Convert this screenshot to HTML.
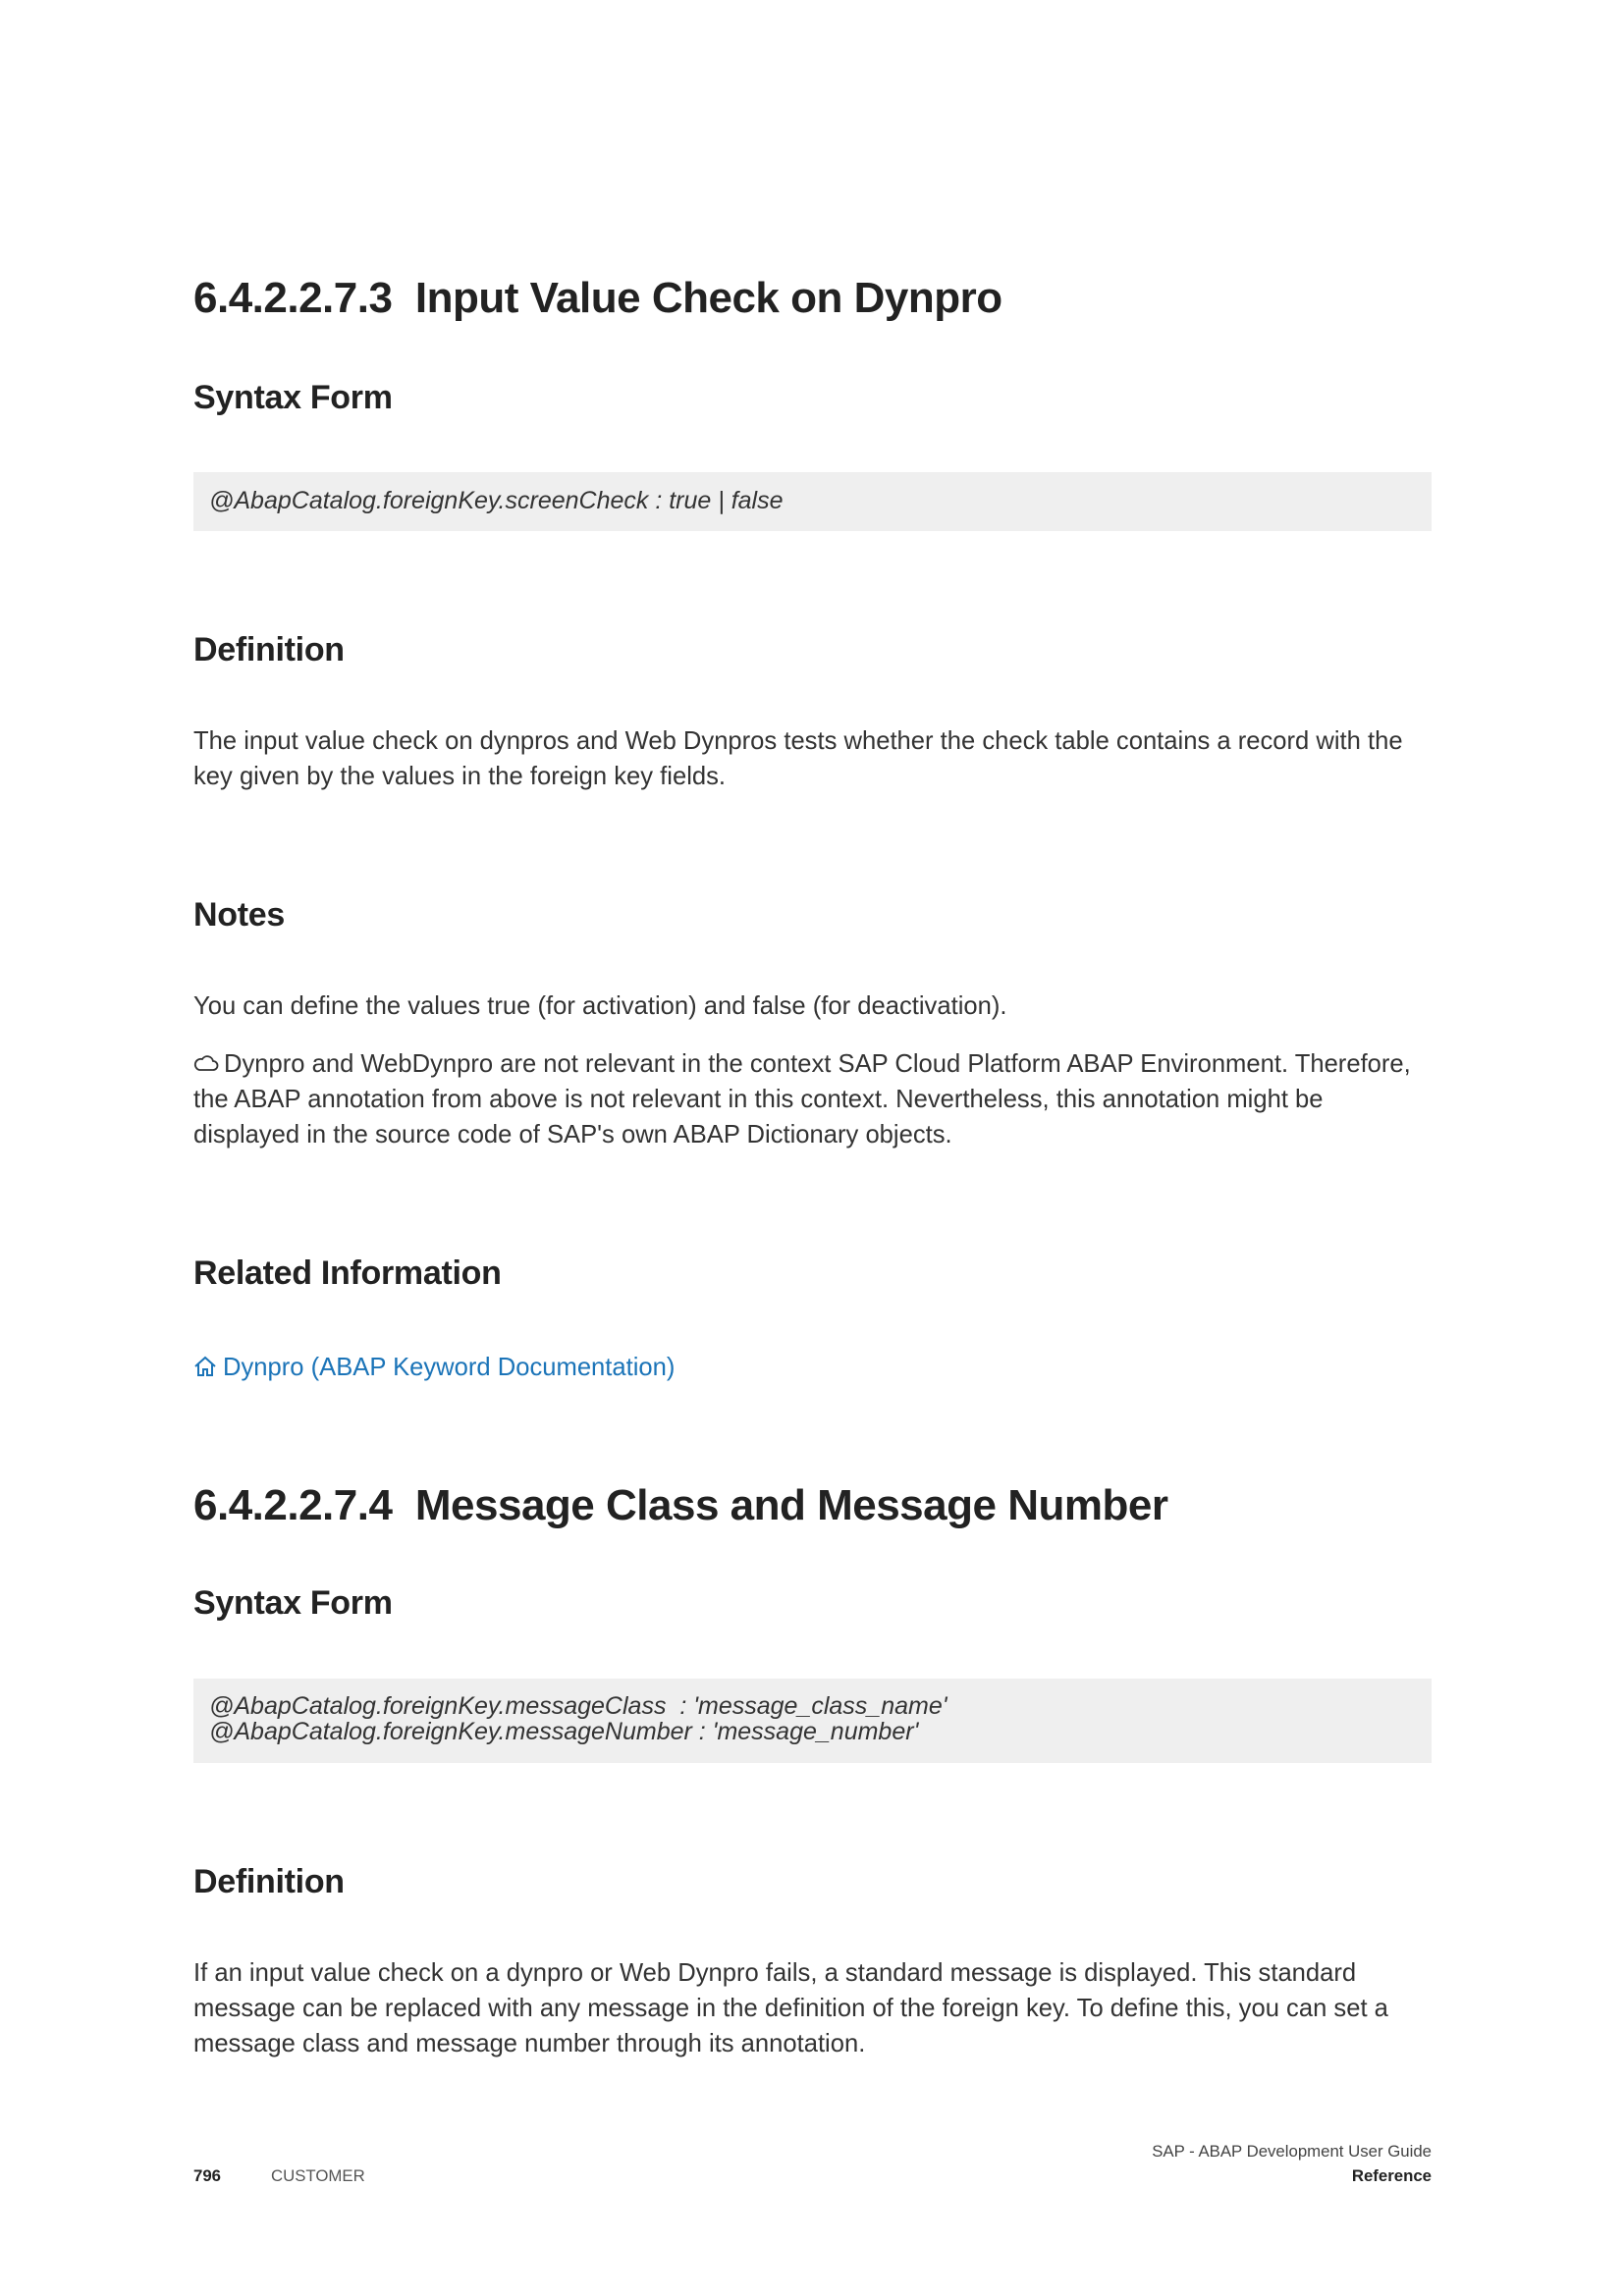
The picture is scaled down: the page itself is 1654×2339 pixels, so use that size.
<!DOCTYPE html>
<html><head><meta charset="utf-8"><style>
body{margin:0;background:#fff;}
.p{position:relative;width:1654px;height:2339px;font-family:"Liberation Sans",sans-serif;color:#333;}
.a{position:absolute;left:197px;white-space:nowrap;}
.h1{font-size:44px;font-weight:bold;color:#222;line-height:50px;letter-spacing:-0.5px;}
.h2{font-size:34px;font-weight:bold;color:#222;line-height:40px;letter-spacing:-0.3px;}
.t{font-size:25.6px;line-height:36px;color:#333;}
.code{position:absolute;left:197px;width:1261px;background:#efefef;}
.c{font-style:italic;font-size:25px;color:#333;position:absolute;left:16px;white-space:nowrap;line-height:26px;}
.f{font-size:16.8px;line-height:20px;}
</style></head><body><div class="p">
<div class="a h1" style="top:279px">6.4.2.2.7.3&nbsp; Input Value Check on Dynpro</div>
<div class="a h2" style="top:385px">Syntax Form</div>
<div class="code" style="top:481px;height:60px"><div class="c" style="top:16px">@AbapCatalog.foreignKey.screenCheck : true | false</div></div>
<div class="a h2" style="top:642px">Definition</div>
<div class="a t" style="top:737px">The input value check on dynpros and Web Dynpros tests whether the check table contains a record with the<br>key given by the values in the foreign key fields.</div>
<div class="a h2" style="top:912px">Notes</div>
<div class="a t" style="top:1007px">You can define the values true (for activation) and false (for deactivation).</div>
<div class="a t" style="top:1066px"><svg width="26" height="20" viewBox="0 0 26 20" style="vertical-align:-1px;margin-right:5px"><path d="M6 17 H20 A4.5 4.5 0 0 0 20 8 A6 6 0 0 0 9 6 A5 5 0 0 0 6 17 Z" fill="none" stroke="#333" stroke-width="1.8"/></svg>Dynpro and WebDynpro are not relevant in the context SAP Cloud Platform ABAP Environment. Therefore,<br>the ABAP annotation from above is not relevant in this context. Nevertheless, this annotation might be<br>displayed in the source code of SAP's own ABAP Dictionary objects.</div>
<div class="a h2" style="top:1277px">Related Information</div>
<div class="a t" style="top:1375px;color:#1b74b8"><svg width="26" height="22" viewBox="0 0 26 22" style="vertical-align:-2px;margin-right:4px"><path d="M2 11 L12 2 L22 11 M5 9 V20 H10 V14 H14 V20 H19 V9" fill="none" stroke="#1b74b8" stroke-width="2"/></svg>Dynpro (ABAP Keyword Documentation)</div>
<div class="a h1" style="top:1509px">6.4.2.2.7.4&nbsp; Message Class and Message Number</div>
<div class="a h2" style="top:1613px">Syntax Form</div>
<div class="code" style="top:1710px;height:86px"><div class="c" style="top:15px">@AbapCatalog.foreignKey.messageClass&nbsp; : 'message_class_name'<br>@AbapCatalog.foreignKey.messageNumber : 'message_number'</div></div>
<div class="a h2" style="top:1897px">Definition</div>
<div class="a t" style="top:1992px">If an input value check on a dynpro or Web Dynpro fails, a standard message is displayed. This standard<br>message can be replaced with any message in the definition of the foreign key. To define this, you can set a<br>message class and message number through its annotation.</div>
<div class="a f" style="top:2207px;font-weight:bold;color:#222">796</div>
<div class="a f" style="top:2207px;left:276px;color:#555">CUSTOMER</div>
<div class="a f" style="top:2182px;left:auto;right:196px;color:#444">SAP - ABAP Development User Guide</div>
<div class="a f" style="top:2207px;left:auto;right:196px;font-weight:bold;color:#222">Reference</div>
</div></body></html>
